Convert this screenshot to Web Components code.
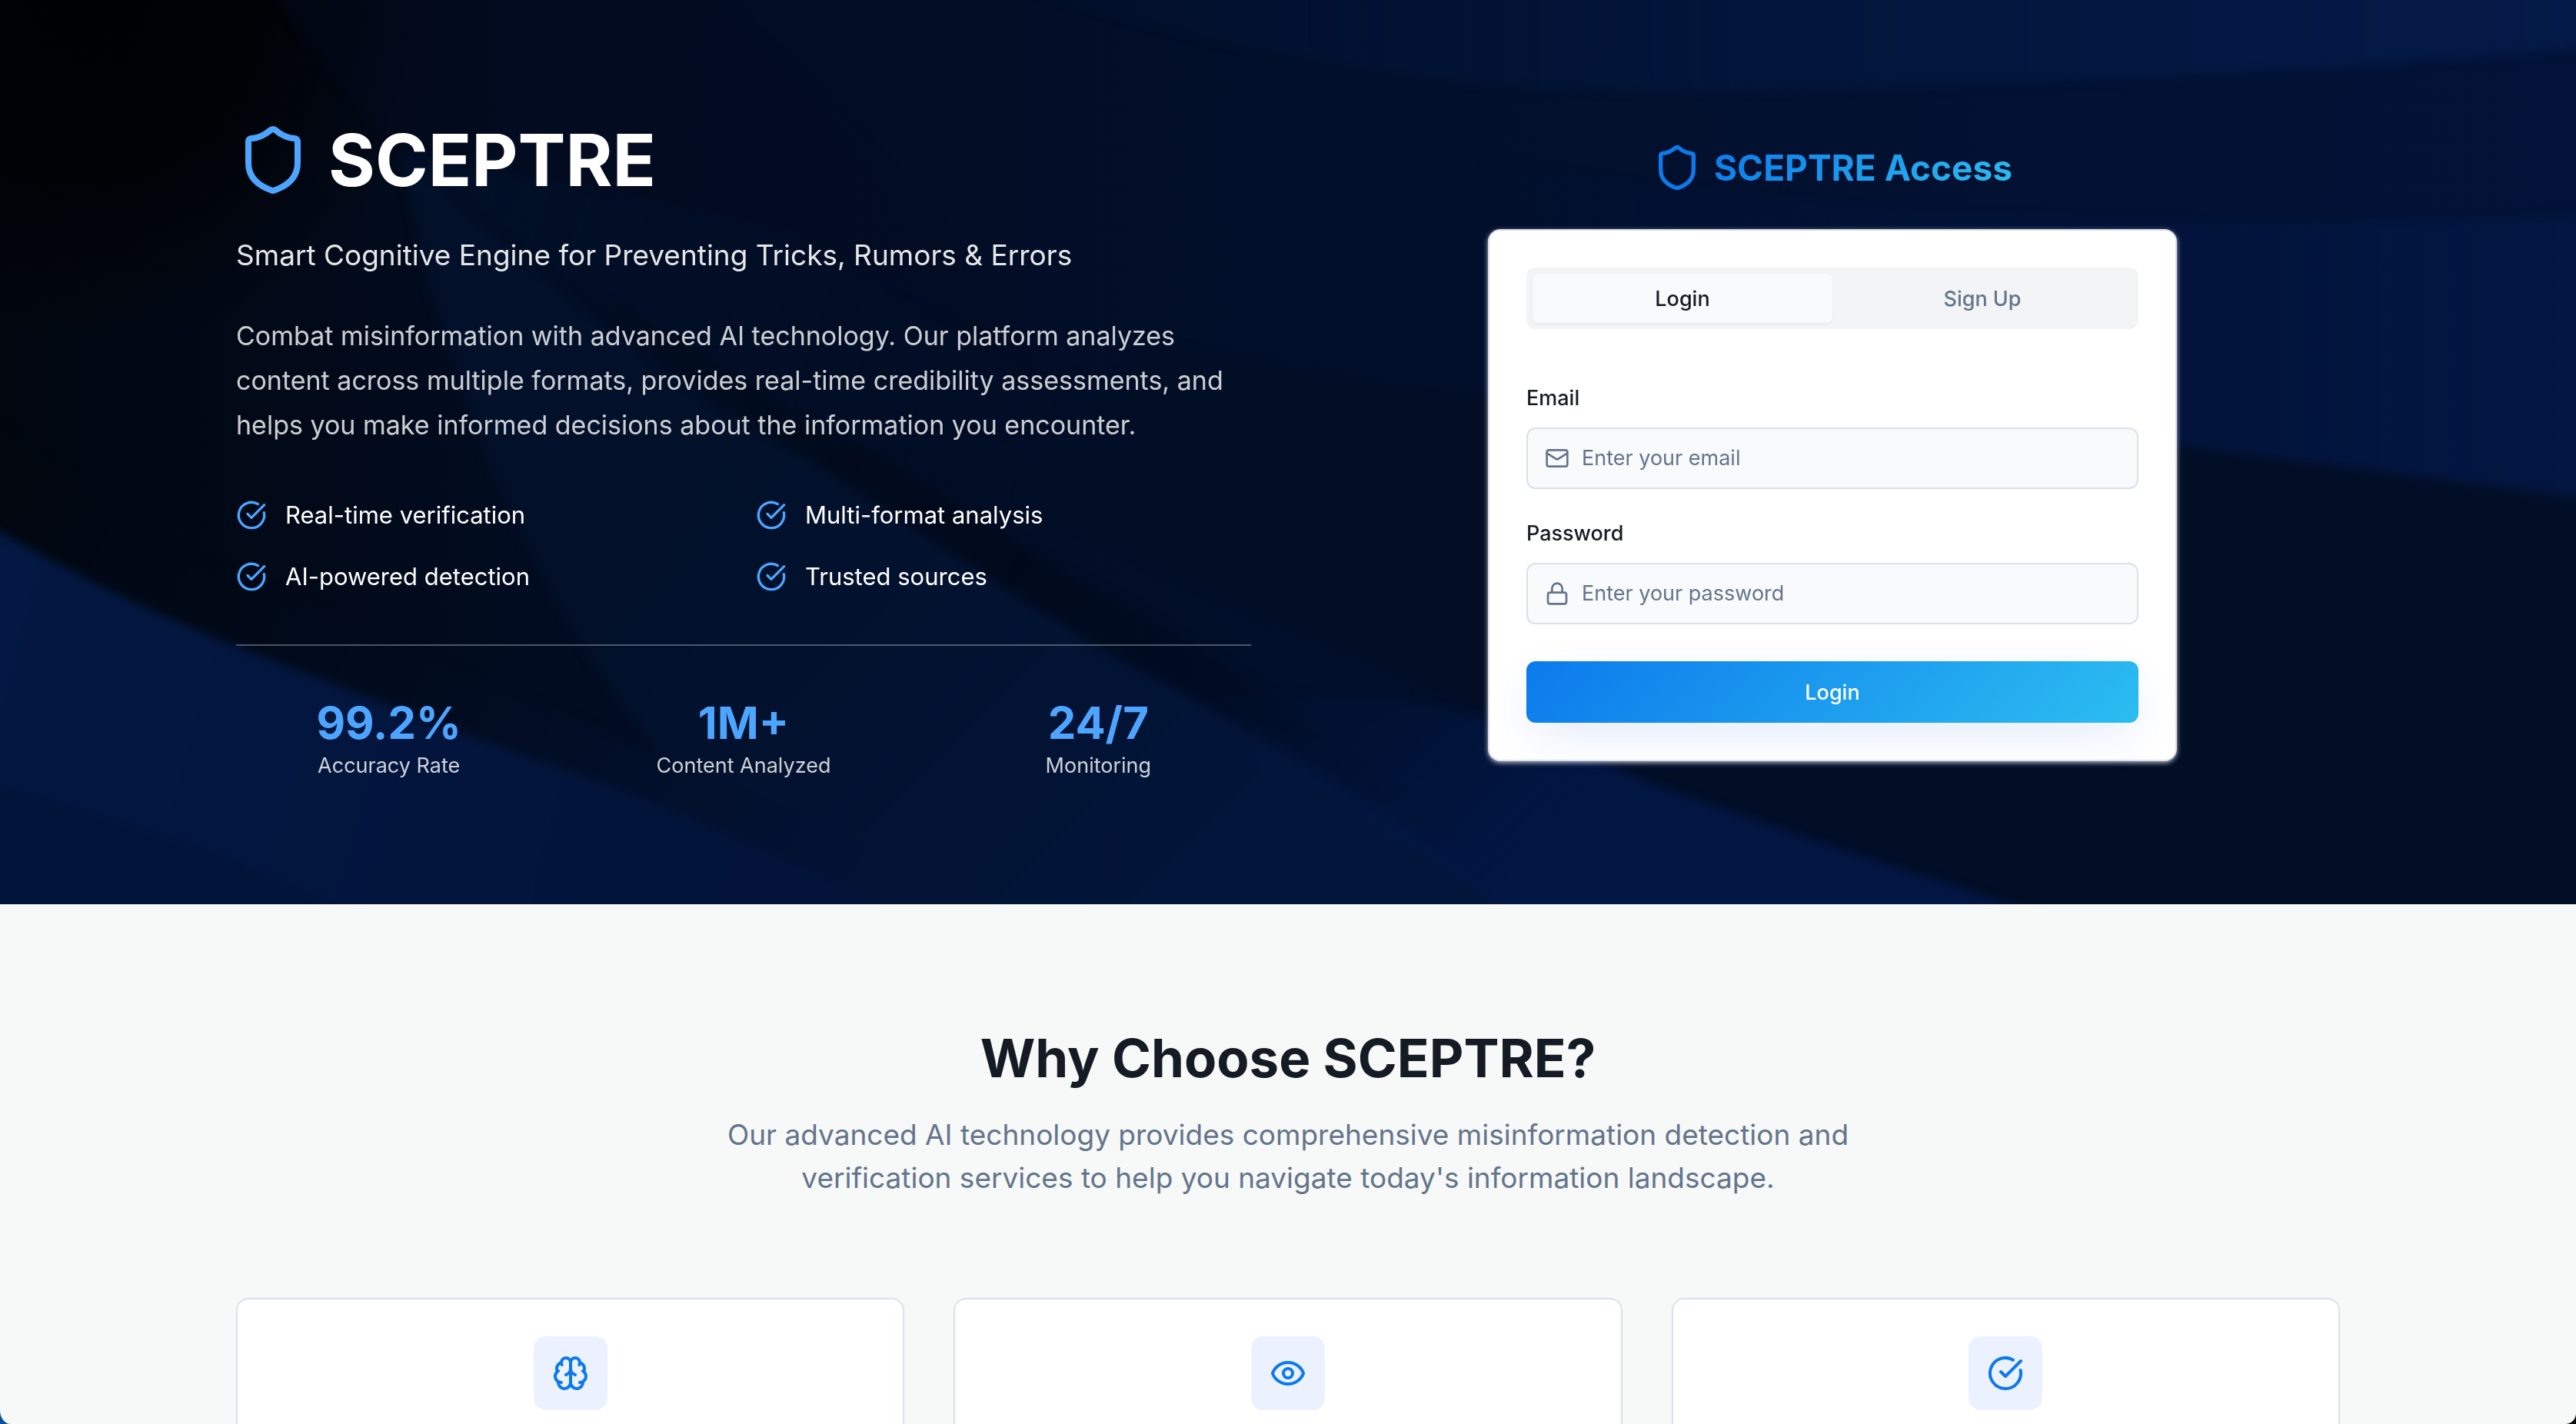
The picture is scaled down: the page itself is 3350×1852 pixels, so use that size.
<!DOCTYPE html>
<html lang="en">
<head>
<meta charset="utf-8">
<meta name="viewport" content="width=device-width, initial-scale=1">
<title>SCEPTRE</title>
<style>
  :root {
    --font: Inter, "Liberation Sans", sans-serif;
    --ink: #151b24;
    --muted: #64748b;
    --line: #dce0e7;
    --field: #f9fafc;
    --primary: #0c7aec;
    --primary-end: #2cbdf0;
    --accent: #4da5ff;
  }
  body { margin: 0; font-family: var(--font); color: var(--ink); background: linear-gradient(90deg, #0a4f9e 50%, #06080c 50%); }
</style>
</head>
<body>
<sceptre-page>
  <sceptre-hero>
    <hero-intro slot="intro">
      <feature-point>Real-time verification</feature-point>
      <feature-point>Multi-format analysis</feature-point>
      <feature-point>AI-powered detection</feature-point>
      <feature-point>Trusted sources</feature-point>
      <stat-figure slot="stats" value="99.2%">Accuracy Rate</stat-figure>
      <stat-figure slot="stats" value="1M+">Content Analyzed</stat-figure>
      <stat-figure slot="stats" value="24/7">Monitoring</stat-figure>
    </hero-intro>
    <access-panel slot="access"></access-panel>
  </sceptre-hero>
  <why-section>
    <span slot="heading">Why Choose SCEPTRE?</span>
    <span slot="lead">Our advanced AI technology provides comprehensive misinformation detection and verification services to help you navigate today's information landscape.</span>
    <feature-card icon="brain"></feature-card>
    <feature-card icon="eye"></feature-card>
    <feature-card icon="check"></feature-card>
  </why-section>
</sceptre-page>

<script>
const ICONS = {
  shield: '<path d="M20 13c0 5-3.5 7.5-7.66 8.95a1 1 0 0 1-.67-.01C7.5 20.5 4 18 4 13V6a1 1 0 0 1 1-1c2 0 4.5-1.2 6.24-2.72a1.17 1.17 0 0 1 1.52 0C14.51 3.81 17 5 19 5a1 1 0 0 1 1 1z"/>',
  check: '<path d="M21.801 10A10 10 0 1 1 17 3.335"/><path d="m9 11 3 3L22 4"/>',
  mail: '<rect width="20" height="16" x="2" y="4" rx="2"/><path d="m22 7-8.97 5.7a1.94 1.94 0 0 1-2.06 0L2 7"/>',
  lock: '<rect width="18" height="11" x="3" y="11" rx="2"/><path d="M7 11V7a5 5 0 0 1 10 0v4"/>',
  eye: '<path d="M2.062 12.348a1 1 0 0 1 0-.696 10.75 10.75 0 0 1 19.876 0 1 1 0 0 1 0 .696 10.75 10.75 0 0 1-19.876 0"/><circle cx="12" cy="12" r="3"/>',
  brain: '<path d="M12 5a3 3 0 1 0-5.997.125 4 4 0 0 0-2.526 5.77 4 4 0 0 0 .556 6.588A4 4 0 1 0 12 18Z"/><path d="M12 5a3 3 0 1 1 5.997.125 4 4 0 0 1 2.526 5.77 4 4 0 0 1-.556 6.588A4 4 0 1 1 12 18Z"/><path d="M15 13a4.5 4.5 0 0 1-3-4 4.5 4.5 0 0 1-3 4"/><path d="M17.599 6.5a3 3 0 0 0 .399-1.375"/><path d="M6.003 5.125A3 3 0 0 0 6.401 6.5"/><path d="M3.477 10.896a4 4 0 0 1 .585-.396"/><path d="M19.938 10.5a4 4 0 0 1 .585.396"/><path d="M6 18a4 4 0 0 1-1.967-.516"/><path d="M19.967 17.484A4 4 0 0 1 18 18"/>'
};

function define(name, render) {
  customElements.define(name, class extends HTMLElement {
    constructor() {
      super();
      this.attachShadow({ mode: 'open' });
    }
    connectedCallback() {
      if (this.shadowRoot.childNodes.length) return;
      const t = document.createElement('template');
      t.innerHTML = '<style>*,:host{box-sizing:border-box}h1,h2,p{margin:0}button,input{font:inherit;color:inherit}</style>' + render(this);
      this.shadowRoot.append(t.content.cloneNode(true));
    }
  });
}

define('line-icon', el => `
  <style>
    :host { display: block; flex: none; width: var(--size, 40px); height: var(--size, 40px); }
    svg { display: block; width: 100%; height: 100%; fill: none; stroke: currentColor; stroke-width: 2; stroke-linecap: round; stroke-linejoin: round; }
  </style>
  <svg viewBox="0 0 24 24" aria-hidden="true">${ICONS[el.getAttribute('name')]}</svg>`);

define('sceptre-page', () => `
  <style>
    :host { display: block; height: 100vh; overflow: hidden; background: #f7f9f8; border-radius: 0 0 14px 14px / 0 0 14px 18px; }
  </style>
  <slot></slot>`);

/* Dark folded-silk backdrop behind the hero */
define('silk-backdrop', () => `
  <style>
    :host { display: block; background: #020d26; overflow: hidden; }
    svg { display: block; width: 100%; height: 100%; }
  </style>
  <svg viewBox="0 0 1568 550" preserveAspectRatio="none" aria-hidden="true">
    <defs>
      <linearGradient id="base" x1="0" y1="0" x2="1" y2="0">
        <stop offset="0" stop-color="#01060f"/><stop offset=".2" stop-color="#020c20"/><stop offset=".5" stop-color="#020f2a"/><stop offset="1" stop-color="#031238"/>
      </linearGradient>
      <linearGradient id="top" gradientUnits="userSpaceOnUse" x1="560" y1="0" x2="1568" y2="0">
        <stop offset="0" stop-color="#03143a" stop-opacity="0"/><stop offset=".5" stop-color="#03153a"/><stop offset="1" stop-color="#041a48"/>
      </linearGradient>
      <linearGradient id="right" gradientUnits="userSpaceOnUse" x1="860" y1="0" x2="1568" y2="0">
        <stop offset="0" stop-color="#031339" stop-opacity="0"/><stop offset="1" stop-color="#031742"/>
      </linearGradient>
      <linearGradient id="ribbon" gradientUnits="userSpaceOnUse" x1="240" y1="90" x2="700" y2="550">
        <stop offset="0" stop-color="#021029"/><stop offset=".5" stop-color="#02112b"/><stop offset="1" stop-color="#03153a"/>
      </linearGradient>
      <linearGradient id="fade" gradientUnits="userSpaceOnUse" x1="240" y1="100" x2="700" y2="250">
        <stop offset="0" stop-color="#021029"/><stop offset="1" stop-color="#021029" stop-opacity="0"/>
      </linearGradient>
      <linearGradient id="shade" gradientUnits="userSpaceOnUse" x1="440" y1="240" x2="940" y2="550">
        <stop offset="0" stop-color="#01080f" stop-opacity=".3"/><stop offset=".4" stop-color="#010919" stop-opacity=".7"/><stop offset="1" stop-color="#020e28" stop-opacity=".1"/>
      </linearGradient>
      <linearGradient id="strip" gradientUnits="userSpaceOnUse" x1="0" y1="300" x2="520" y2="540">
        <stop offset="0" stop-color="#01060f"/><stop offset=".5" stop-color="#020c1f"/><stop offset="1" stop-color="#031335"/>
      </linearGradient>
      <linearGradient id="low" gradientUnits="userSpaceOnUse" x1="0" y1="400" x2="540" y2="550">
        <stop offset="0" stop-color="#031842"/><stop offset="1" stop-color="#031339"/>
      </linearGradient>
      <linearGradient id="glow" gradientUnits="userSpaceOnUse" x1="760" y1="400" x2="900" y2="550">
        <stop offset="0" stop-color="#031640" stop-opacity="0"/><stop offset="1" stop-color="#031744"/>
      </linearGradient>
      <radialGradient id="corner" gradientUnits="userSpaceOnUse" cx="60" cy="0" r="210">
        <stop offset="0" stop-color="#000103"/><stop offset=".5" stop-color="#000103" stop-opacity=".8"/><stop offset="1" stop-color="#000103" stop-opacity="0"/>
      </radialGradient>
      <filter id="soft" x="-10%" y="-10%" width="120%" height="120%" color-interpolation-filters="sRGB"><feGaussianBlur stdDeviation="3"/></filter>
    </defs>
    <rect width="1568" height="550" fill="url(#base)"/>
    <g filter="url(#soft)">
      <path d="M560 -30 Q800 62 1060 55 Q1350 50 1610 26 V-30Z" fill="url(#top)"/>
      <path d="M900 96 Q1180 150 1610 130 V320 H1100Z" fill="url(#right)"/>
      <path d="M700 210 Q1000 262 1330 272 Q1460 288 1610 308 V610 H1440 Q1000 500 620 300Z" fill="#020e26"/>
    </g>
    <rect width="300" height="220" fill="url(#corner)"/>
    <g filter="url(#soft)">
      <path d="M150 -30 Q200 50 244 92 Q420 125 485 144 L640 240 Q560 100 400 -30Z" fill="#020b1e" opacity=".4"/>
      <path d="M244 92 Q400 122 485 144 L700 250 L495 279 Q330 160 244 92Z" fill="url(#fade)"/>
      <path d="M244 92 Q279 123 344 178 Q423 245 495 281 Q574 326 670 396 Q850 477 980 610 H560 Q300 420 244 92Z" fill="url(#ribbon)"/>
      <path d="M344 160 Q423 235 495 281 Q574 335 632 371 Q740 432 980 580 Q760 400 650 350 Q560 290 520 270 Q430 220 344 160Z" fill="url(#shade)"/>
      <path d="M700 430 Q850 400 1000 476 Q1120 520 1380 600 H980 Q850 500 700 430Z" fill="url(#glow)"/>
      <path d="M-40 230 Q60 310 131 345 Q256 401 365 445 Q500 490 700 600 H-40Z" fill="url(#strip)"/>
      <path d="M-40 300 Q60 360 131 388 Q215 421 319 460 Q440 500 640 600 H-40Z" fill="url(#low)"/>
      <path d="M-40 468 Q120 500 300 600 H-40Z" fill="#031237" opacity=".7"/>
    </g>
  </svg>`);

define('sceptre-hero', () => `
  <style>
    :host { display: grid; color: #fff; }
    silk-backdrop, .content { grid-area: 1 / 1; }
    silk-backdrop { height: 0; min-height: 100%; }
    .content { z-index: 1; width: 100%; max-width: 2800px; margin: 0 auto; padding: 160px 32px; display: grid; grid-template-columns: 1fr 1fr; gap: 96px; align-items: center; }
  </style>
  <silk-backdrop></silk-backdrop>
  <div class="content"><slot name="intro"></slot><slot name="access"></slot></div>`);

define('hero-intro', () => `
  <style>
    :host { display: block; }
    .brand { display: flex; align-items: center; gap: 24px; margin-bottom: 48px; }
    .brand line-icon { --size: 96px; color: var(--accent); }
    h1 { font-size: 93px; line-height: 96px; font-weight: 700; }
    .tagline { font-size: 37px; line-height: 56px; color: rgba(255,255,255,.9); margin-bottom: 48px; }
    .about { font-size: 34px; line-height: 58px; color: rgba(255,255,255,.8); margin-bottom: 64px; }
    .points { display: grid; grid-template-columns: 1fr 1fr; gap: 32px; margin-bottom: 64px; }
    .stats { display: grid; grid-template-columns: repeat(3, 1fr); gap: 64px; padding-top: 64px; border-top: 2px solid rgba(255,255,255,.3); }
  </style>
  <div class="brand"><line-icon name="shield"></line-icon><h1>SCEPTRE</h1></div>
  <p class="tagline">Smart Cognitive Engine for Preventing Tricks, Rumors &amp; Errors</p>
  <p class="about">Combat misinformation with advanced AI technology. Our platform analyzes content across multiple formats, provides real-time credibility assessments, and helps you make informed decisions about the information you encounter.</p>
  <div class="points"><slot></slot></div>
  <div class="stats"><slot name="stats"></slot></div>`);

define('feature-point', () => `
  <style>
    :host { display: flex; align-items: center; gap: 24px; font-size: 31px; line-height: 48px; }
    line-icon { color: var(--accent); }
  </style>
  <line-icon name="check"></line-icon><span><slot></slot></span>`);

define('stat-figure', el => `
  <style>
    :host { display: block; text-align: center; }
    .value { font-size: 58px; line-height: 72px; font-weight: 700; color: var(--accent); }
    .label { font-size: 27px; line-height: 40px; color: rgba(255,255,255,.8); }
  </style>
  <div class="value">${el.getAttribute('value')}</div>
  <div class="label"><slot></slot></div>`);

define('text-field', el => `
  <style>
    :host { display: block; }
    label { display: block; font-size: 27px; line-height: 52px; font-weight: 500; color: var(--ink); }
    .box { display: flex; align-items: center; gap: 16px; height: 80px; margin-top: 12px; padding: 0 22px; border: 2px solid var(--line); border-radius: 12px; background: var(--field); color: var(--muted); }
    line-icon { --size: 32px; }
    input { flex: 1; min-width: 0; border: 0; outline: 0; padding: 0; background: none; font-size: 27px; line-height: 40px; color: var(--ink); }
    input::placeholder { color: var(--muted); opacity: 1; }
  </style>
  <label for="control">${el.getAttribute('label')}</label>
  <div class="box"><line-icon name="${el.getAttribute('icon')}"></line-icon><input id="control" type="${el.getAttribute('type')}" placeholder="${el.getAttribute('placeholder')}"></div>`);

define('access-panel', () => `
  <style>
    :host { display: block; width: 100%; max-width: 896px; margin: 0 auto; }
    .title { display: flex; align-items: center; justify-content: center; gap: 16px; margin-bottom: 48px; color: var(--primary); }
    .title line-icon { --size: 64px; }
    h2 { font-size: 46px; line-height: 64px; font-weight: 700; background: linear-gradient(135deg, var(--primary), var(--primary-end)); -webkit-background-clip: text; background-clip: text; color: transparent; }
    .card { padding: 48px; border: 2px solid var(--line); border-radius: 16px; background: #fff; box-shadow: 0 2px 6px rgba(225,230,240,.8); color: var(--ink); }
    .tabs { display: grid; grid-template-columns: 1fr 1fr; padding: 8px; margin-bottom: 64px; border-radius: 12px; background: #f3f4f6; }
    .tabs button { height: 64px; padding: 0; border: 0; border-radius: 8px; background: none; font-size: 27px; font-weight: 500; color: var(--muted); }
    .tabs button[aria-selected="true"] { background: var(--field); color: var(--ink); box-shadow: 0 2px 4px rgba(0,0,0,.05); }
    form { display: grid; gap: 32px; }
    .submit { height: 80px; margin-top: 16px; padding: 0; border: 0; border-radius: 12px; background: linear-gradient(135deg, var(--primary), var(--primary-end)); box-shadow: 0 20px 60px -10px rgba(37,99,235,.15); color: #fff; font-size: 27px; font-weight: 500; }
  </style>
  <div class="title"><line-icon name="shield"></line-icon><h2>SCEPTRE Access</h2></div>
  <div class="card">
    <div class="tabs" role="tablist">
      <button type="button" role="tab" aria-selected="true">Login</button>
      <button type="button" role="tab" aria-selected="false">Sign Up</button>
    </div>
    <form>
      <text-field label="Email" icon="mail" type="email" placeholder="Enter your email"></text-field>
      <text-field label="Password" icon="lock" type="password" placeholder="Enter your password"></text-field>
      <button class="submit" type="button">Login</button>
    </form>
  </div>`);

define('why-section', () => `
  <style>
    :host { display: block; max-width: 2800px; margin: 0 auto; padding: 160px 32px; }
    header { text-align: center; margin-bottom: 128px; }
    h2 { font-size: 69px; line-height: 80px; font-weight: 700; margin-bottom: 32px; }
    p { max-width: 1536px; margin: 0 auto; font-size: 37px; line-height: 56px; color: var(--muted); }
    .cards { display: grid; grid-template-columns: repeat(3, 1fr); gap: 64px; }
  </style>
  <header>
    <h2><slot name="heading"></slot></h2>
    <p><slot name="lead"></slot></p>
  </header>
  <div class="cards"><slot></slot></div>`);

define('feature-card', el => `
  <style>
    :host { display: flex; flex-direction: column; align-items: center; min-height: 400px; padding: 48px; border: 2px solid var(--line); border-radius: 16px; background: #fff; }
    .tile { display: grid; place-items: center; width: 96px; height: 96px; border-radius: 16px; background: #ebf1fe; color: var(--primary); }
    line-icon { --size: 48px; }
  </style>
  <div class="tile"><line-icon name="${el.getAttribute('icon')}"></line-icon></div>`);
</script>
</body>
</html>
